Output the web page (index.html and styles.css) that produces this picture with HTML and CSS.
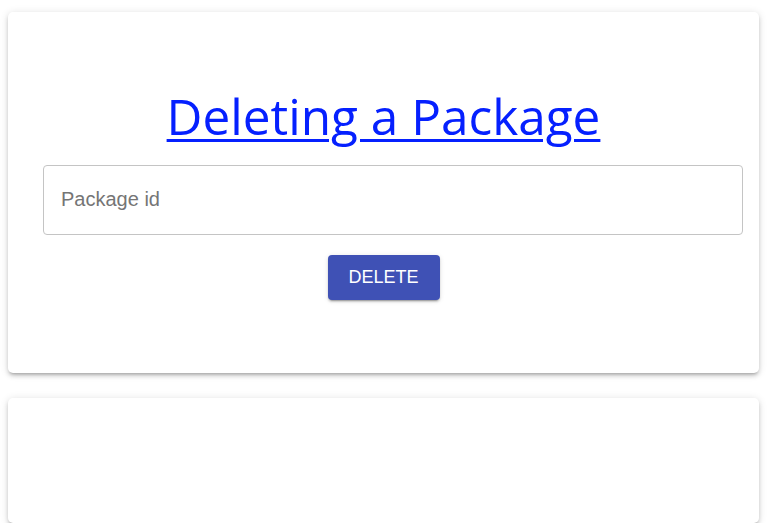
FILE: index.html
```html
<!DOCTYPE html>
<html>
<head>
<meta charset="utf-8">
<link rel="stylesheet" href="styles.css">
</head>
<body>
<div class="page">
  <section class="card card-main">
    <h1 class="title"><a href="#">Deleting a Package</a></h1>
    <input class="field" type="text" placeholder="Package id">
    <button class="btn" type="button">DELETE</button>
  </section>
  <section class="card card-empty"></section>
</div>
</body>
</html>
```

FILE: styles.css
```css
html, body {
  margin: 0;
  padding: 0;
  background: #ffffff;
}
body {
  padding: 12px 9px 0 8px;
  font-family: "Liberation Sans", Arial, sans-serif;
}
.page {
  display: flex;
  flex-direction: column;
  gap: 25px;
}
.card {
  background: #ffffff;
  border-radius: 5px;
  box-shadow: 0 3px 3px -2px rgba(0,0,0,0.2), 0 3px 4px 0 rgba(0,0,0,0.14), 0 1px 8px 0 rgba(0,0,0,0.12);
}
.card-main {
  height: 361px;
  box-sizing: border-box;
  display: flex;
  flex-direction: column;
  align-items: center;
  padding-top: 74px;
}
.title {
  margin: 0;
  font-family: "Open Sans", "Noto Sans", sans-serif;
  font-weight: 400;
  font-size: 49.5px;
  line-height: 60px;
  height: 60px;
}
.title a {
  color: #0520ff;
  text-decoration: underline;
  text-decoration-thickness: 3px;
  text-underline-offset: 4px;
}
.field {
  align-self: stretch;
  margin: 19px 16px 0 35px;
  height: 70px;
  box-sizing: border-box;
  border: 1px solid #c4c4c4;
  border-radius: 4px;
  padding: 0 17px 2px 17px;
  font-family: "Liberation Sans", Arial, sans-serif;
  font-size: 20px;
  color: #333;
  outline: none;
}
.field::placeholder {
  color: #757575;
  opacity: 1;
}
.btn {
  margin-top: 20px;
  width: 112px;
  height: 45px;
  border: none;
  border-radius: 4px;
  background: #3f51b5;
  color: #ffffff;
  font-family: "Liberation Sans", Arial, sans-serif;
  font-size: 18px;
  padding: 0;
  box-shadow: 0 3px 1px -2px rgba(0,0,0,0.2), 0 2px 2px 0 rgba(0,0,0,0.14), 0 1px 5px 0 rgba(0,0,0,0.12);
}
.card-empty {
  height: 125px;
}
```
